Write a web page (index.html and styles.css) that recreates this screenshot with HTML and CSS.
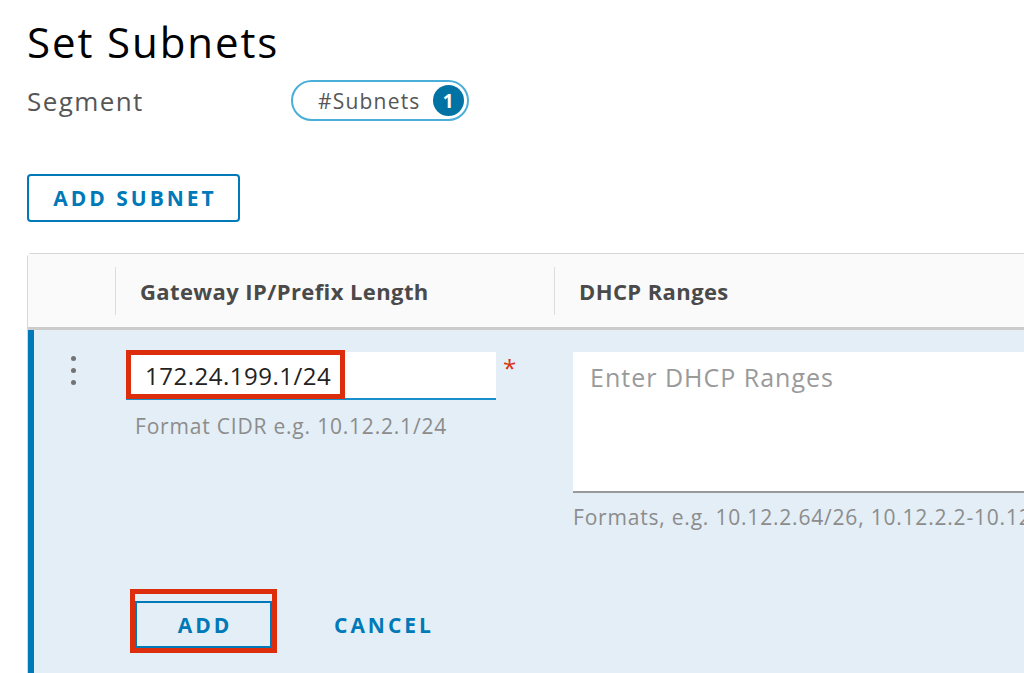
FILE: index.html
```html
<!DOCTYPE html>
<html lang="en">
<head>
  <meta charset="UTF-8" />
  <meta name="viewport" content="width=device-width, initial-scale=1.0"/>
  <title>Set Subnets</title>
  <link rel="stylesheet" href="styles.css">
</head>
<body>
  <div class="page">
    <h1>Set Subnets</h1>

    <div class="segment-row">
      <span class="segment-label">Segment</span>
      <span class="pill">#Subnets <span class="badge">1</span></span>
    </div>

    <button class="btn-outline">ADD SUBNET</button>

    <div class="grid">
      <div class="grid-head">
        <div class="col-handle"></div>
        <div class="col-gw"><span class="head-text">Gateway IP/Prefix Length</span></div>
        <div class="col-dhcp"><span class="head-text">DHCP Ranges</span></div>
      </div>

      <div class="grid-row">
        <div class="row-fields">
          <div class="col-handle">
            <span class="dots"><i></i><i></i><i></i></span>
          </div>
          <div class="col-gw cell-gw">
            <div class="field">
              <div class="input-wrap">
                <input type="text" value="172.24.199.1/24">
                <span class="mark mark-input"></span>
              </div>
              <span class="required">*</span>
            </div>
            <div class="helper helper-gw">Format CIDR e.g. 10.12.2.1/24</div>
          </div>
          <div class="col-dhcp cell-dhcp">
            <textarea placeholder="Enter DHCP Ranges"></textarea>
            <div class="helper">Formats, e.g. 10.12.2.64/26, 10.12.2.2-10.12.2.50</div>
          </div>
        </div>

        <div class="actions">
          <div class="add-wrap">
            <button class="btn-add">ADD</button>
            <span class="mark mark-add"></span>
          </div>
          <button class="btn-link">CANCEL</button>
        </div>
      </div>
    </div>
  </div>
</body>
</html>
```

FILE: styles.css
```css
html, body {
  margin: 0;
  padding: 0;
  overflow: hidden;
}

body {
  font-family: 'Open Sans', 'Noto Sans', sans-serif;
  background-color: #fff;
  color: #565656;
}

.page {
  padding: 0 0 0 27px;
}

h1 {
  margin: 0;
  padding-top: 14px;
  font-size: 42px;
  font-weight: 400;
  line-height: 56px;
  color: #000;
  letter-spacing: 1.9px;
}

.segment-row {
  display: flex;
  align-items: center;
  margin-top: 10px;
  height: 41px;
}

.segment-label {
  width: 264px;
  font-size: 26px;
  letter-spacing: 1.4px;
  color: #565656;
}

.pill {
  display: inline-flex;
  align-items: center;
  gap: 12px;
  height: 41px;
  box-sizing: border-box;
  padding: 0 3px 0 25px;
  border: 2px solid #49afd9;
  border-radius: 22px;
  font-size: 21px;
  letter-spacing: 1.2px;
  color: #565656;
}

.badge {
  display: inline-flex;
  align-items: center;
  justify-content: center;
  width: 31px;
  height: 31px;
  border-radius: 50%;
  background-color: #0072a3;
  color: #fff;
  font-size: 19px;
  font-weight: 700;
  letter-spacing: 0;
}

.btn-outline {
  display: block;
  margin-top: 53px;
  width: 213px;
  height: 48px;
  padding: 0;
  border: 2px solid #0079b8;
  border-radius: 4px;
  background: #fff;
  color: #0079b8;
  font-family: inherit;
  font-size: 21px;
  font-weight: 700;
  letter-spacing: 3px;
  text-indent: 3px;
}

/* tabel subnet */
.grid {
  margin-top: 31px;
  width: 1100px;
  border: 1px solid #d7d7d7;
  border-radius: 4px 0 0 0;
}

.grid-head {
  display: flex;
  align-items: center;
  height: 73px;
  background-color: #fafafa;
  border-bottom: 3px solid #ccc;
}

.col-handle {
  width: 87px;
  flex: none;
}

.col-gw {
  width: 438px;
  flex: none;
}

.col-dhcp {
  flex: 1;
}

.grid-head .col-gw,
.grid-head .col-dhcp {
  border-left: 1px solid #ddd;
  height: 48px;
  display: flex;
  align-items: center;
}

.head-text {
  padding-left: 24px;
  font-size: 22px;
  font-weight: 700;
  letter-spacing: 0.4px;
  color: #4a4a4a;
}

.grid-row {
  background-color: #e3eef6;
  border-left: 6px solid #0079b8;
  height: 400px;
}

.row-fields {
  display: flex;
  padding-top: 22px;
}

.grid-row .col-handle {
  width: 82px;
}

.dots {
  display: flex;
  flex-direction: column;
  gap: 7px;
  padding: 4px 0 0 37px;
}

.dots i {
  width: 5px;
  height: 5px;
  border-radius: 50%;
  background-color: #737373;
}

.cell-gw {
  padding-left: 10px;
  box-sizing: border-box;
}

.field {
  display: flex;
  align-items: flex-start;
}

.input-wrap {
  position: relative;
}

.input-wrap input {
  display: block;
  width: 370px;
  height: 48px;
  box-sizing: border-box;
  border: none;
  border-bottom: 2px solid #1a8fcc;
  padding: 0 0 0 19px;
  font-family: inherit;
  font-size: 24px;
  letter-spacing: 0.5px;
  color: #222;
  background: #fff;
  outline: none;
}

.required {
  margin-left: 7px;
  margin-top: 4px;
  color: #d9320f;
  font-size: 24px;
  line-height: 24px;
}

.mark {
  position: absolute;
  border: 5px solid #dc2d0c;
  box-sizing: border-box;
  pointer-events: none;
}

.mark-input {
  left: 0;
  top: -2px;
  width: 219px;
  height: 49px;
}

.helper {
  margin-top: 12px;
  font-size: 21px;
  letter-spacing: 0.8px;
  color: #8c8c8c;
}

.helper-gw {
  padding-left: 9px;
}

.cell-dhcp {
  padding-left: 19px;
}

.cell-dhcp textarea {
  display: block;
  width: 100%;
  height: 141px;
  box-sizing: border-box;
  border: none;
  border-bottom: 2px solid #9a9a9a;
  padding: 8px 17px;
  font-family: inherit;
  font-size: 25px;
  letter-spacing: 1px;
  background: #fff;
  resize: none;
  outline: none;
}

.cell-dhcp textarea::placeholder {
  color: #9a9a9a;
}

.cell-dhcp .helper {
  margin-top: 10px;
  white-space: nowrap;
}

.actions {
  display: flex;
  align-items: center;
  gap: 42px;
  margin-top: 58px;
  padding-left: 101px;
}

.add-wrap {
  position: relative;
  padding-top: 12px;
}

.btn-add {
  display: block;
  width: 137px;
  height: 47px;
  padding: 0;
  border: 2px solid #0079b8;
  background: transparent;
  color: #0079b8;
  font-family: inherit;
  font-size: 21px;
  font-weight: 700;
  letter-spacing: 3px;
  text-indent: 3px;
}

.mark-add {
  left: -5px;
  top: 0;
  width: 147px;
  height: 64px;
}

.btn-link {
  margin-top: 12px;
  border: none;
  background: transparent;
  color: #0079b8;
  font-family: inherit;
  font-size: 21px;
  font-weight: 700;
  letter-spacing: 3px;
  padding: 0 20px;
}
```
